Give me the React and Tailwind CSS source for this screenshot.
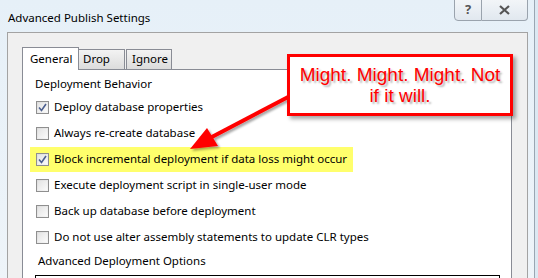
import { Fragment } from 'react';

const options = [
  { label: 'Deploy database properties', checked: true },
  { label: 'Always re-create database', checked: false },
  { label: 'Block incremental deployment if data loss might occur', checked: true, highlight: true },
  { label: 'Execute deployment script in single-user mode', checked: false },
  { label: 'Back up database before deployment', checked: false },
  { label: 'Do not use alter assembly statements to update CLR types', checked: false },
];

function CheckBox({ checked }) {
  return (
    <span className="w-[13px] h-[13px] border border-[#8f8f8f] bg-gradient-to-br from-[#dcdcdc] to-[#f7f7f7] flex items-center justify-center shrink-0">
      <span className="w-[9px] h-[9px] bg-gradient-to-br from-[#e4e4e4] to-[#fafafa] flex items-center justify-center">
        {checked && (
          <svg width="9" height="9" viewBox="0 0 9 9">
            <path d="M1 4.5 L3.5 7.5 L8 1" fill="none" stroke="#4c5f8f" strokeWidth="1.6" />
          </svg>
        )}
      </span>
    </span>
  );
}

function OptionRow({ label, checked, highlight }) {
  return (
    <div className="h-[26px] flex items-center">
      <div
        className={
          highlight
            ? 'flex items-center h-[25px] -ml-[6px] pl-[6px] pr-[6px] bg-[#ffff6c]'
            : 'flex items-center'
        }
      >
        <CheckBox checked={checked} />
        <span className="ml-[5px] text-black">{label}</span>
      </div>
    </div>
  );
}

function Arrow() {
  return (
    <svg className="absolute left-0 top-0 pointer-events-none" width="538" height="278">
      <defs>
        <filter id="sh" x="-20%" y="-20%" width="140%" height="140%">
          <feDropShadow dx="2" dy="2" stdDeviation="1.2" floodColor="#000" floodOpacity="0.35" />
        </filter>
      </defs>
      <g filter="url(#sh)">
        <line x1="290" y1="96" x2="208" y2="139" stroke="#ff0000" strokeWidth="4" />
        <polygon points="190,149 218,146 207,128" fill="#ff0000" />
      </g>
    </svg>
  );
}

export default function App() {
  return (
    <div
      className="w-[538px] h-[278px] relative overflow-hidden bg-gradient-to-b from-[#e6f0f8] to-[#eef4f9] text-[11.5px]"
      style={{ fontFamily: '"Noto Sans", "Open Sans", sans-serif' }}
    >
      <div className="flex h-full">
        <div className="w-[534px] flex flex-col">
          <div className="h-[32px] shrink-0 flex justify-between items-start">
            <span className="pl-[8px] pt-[9px] text-black">Advanced Publish Settings</span>
            <div className="flex mr-[6px] -mt-[1px]">
              <span className="w-[28px] h-[22px] border border-[#9aa3ad] rounded-bl-[4px] bg-gradient-to-b from-[#f2f5f8] to-[#e1e8ef] flex items-center justify-center text-[#555] text-[13px] font-bold">
                ?
              </span>
              <span className="w-[46px] h-[22px] border border-l-0 border-[#9aa3ad] rounded-br-[4px] bg-gradient-to-b from-[#f2f5f8] to-[#e1e8ef] flex items-center justify-center">
                <svg width="11" height="10" viewBox="0 0 11 10">
                  <path d="M1 1 L10 9 M10 1 L1 9" stroke="#555" strokeWidth="2.2" />
                </svg>
              </span>
            </div>
          </div>
          <div className="ml-[7px] mr-[6px] flex-1 min-h-0 overflow-hidden border border-[#a3a3a3] border-b-0 bg-[#f0f0f0] pl-[14px] pr-[15px] pt-[13px]">
            <div className="flex items-end h-[23px] text-black">
              <div className="w-[57px] h-[23px] bg-white border border-b-0 border-[#898c95] pl-[7px] pt-[2px] relative z-10 -mb-[1px]">
                General
              </div>
              <div className="w-[46px] h-[20px] bg-gradient-to-b from-[#f3f3f3] to-[#dcdcdc] border border-l-0 border-b-0 border-[#898c95] pl-[4px]">
                Drop
              </div>
              <div className="w-[46px] h-[20px] ml-[1px] bg-gradient-to-b from-[#f3f3f3] to-[#dcdcdc] border border-b-0 border-[#898c95] pl-[5px]">
                Ignore
              </div>
            </div>
            <div className="bg-white border border-[#898c95] h-[300px] pl-[12px] pt-[4px] text-black">
              <div className="h-[19px] leading-[19px]">Deployment Behavior</div>
              <div className="pl-[1px] pt-[1px]">
                {options.map((o) => (
                  <Fragment key={o.label}>
                    <OptionRow {...o} />
                  </Fragment>
                ))}
              </div>
              <div className="pl-[3px] h-[22px] flex items-center">Advanced Deployment Options</div>
              <div className="mt-[3px] w-[465px] h-[40px] border border-black bg-white" />
            </div>
          </div>
        </div>
        <div className="flex-1 border-l border-[#9aa6b2] bg-[#dbe8f2]" />
      </div>

      <Arrow />

      <div className="absolute left-[287px] top-[54px] w-[226px] h-[62px] border-[3px] border-[#ff0000] bg-white shadow-[3px_3px_4px_rgba(0,0,0,0.35)] flex flex-col items-center justify-center">
        <span
          className="text-[#ff0000] text-[19px] leading-[21px] text-center"
          style={{ fontFamily: '"Liberation Sans", Arial, sans-serif', textShadow: '2px 2px 2px rgba(0,0,0,0.3)' }}
        >
          Might. Might. Might. Not
          <br />
          if it will.
        </span>
      </div>
    </div>
  );
}
